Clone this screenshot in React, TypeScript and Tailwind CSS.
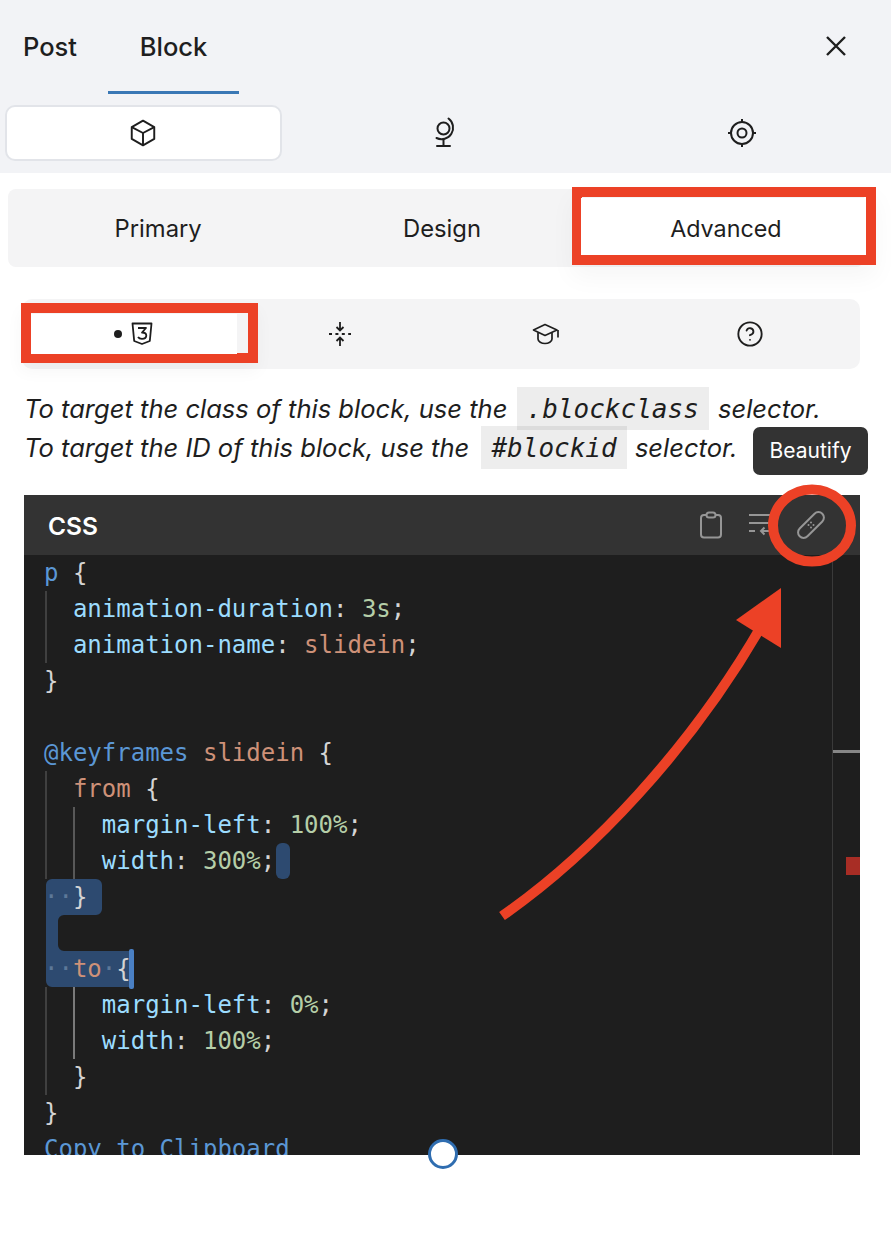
import React from "react";
import { CircleHelp } from "lucide-react";

const sans = "font-['Inter','Liberation_Sans',sans-serif]";
const mono = "font-['DejaVu_Sans_Mono','Liberation_Mono',monospace]";

const S = ({ c, children }: { c: string; children: React.ReactNode }) => <span className={c}>{children}</span>;
const sel = "text-[#5b97d5]";
const prop = "text-[#9cdcfe]";
const str = "text-[#ce9178]";
const num = "text-[#b5cea8]";
const dot = "text-[#5d7898]";

function Line({ children }: { children?: React.ReactNode }) {
  return <div className="h-[36px] leading-[36px] whitespace-pre">{children}</div>;
}

function Cube() {
  return (
    <svg width="28" height="30" viewBox="0 0 26 28" fill="none" stroke="#1e1e1e" strokeWidth="1.800" strokeLinejoin="round">
      <path d="M13 2.500 23.500 8.500V19.500L13 25.500 2.500 19.500V8.500Z" />
      <path d="M2.500 8.500 13 14 23.500 8.500M13 14V25.500" />
    </svg>
  );
}
function Globe() {
  return (
    <svg width="24" height="32" viewBox="0 0 24 32" fill="none" stroke="#1e1e1e" strokeWidth="2" strokeLinecap="round">
      <circle cx="10.500" cy="11.500" r="6" />
      <path d="M15.500 1.500a11.500 11.500 0 0 1-12 19.500" />
      <path d="M10.500 23v6M4 29h13" />
    </svg>
  );
}
function Target() {
  return (
    <svg width="30" height="30" viewBox="0 0 30 30" fill="none" stroke="#1e1e1e" strokeWidth="2">
      <circle cx="15" cy="15" r="11" />
      <circle cx="15" cy="15" r="4.500" />
      <path d="M15 1v3M15 26v3M1 15h3M26 15h3" />
    </svg>
  );
}
function Css3() {
  return (
    <svg width="22" height="24" viewBox="0 0 22 24" fill="none" stroke="#1e1e1e" strokeWidth="1.800" strokeLinejoin="round">
      <path d="M1.500 1.500h19l-1.700 17.500-7.800 3-7.800-3Z" />
      <path d="M7 6h8l-4 4.500c3 0 4.300 1.300 4.300 3 0 2-1.800 3.300-4.300 3.300-1.800 0-3.300-.7-4-1.800" />
    </svg>
  );
}
function Compress() {
  return (
    <svg width="24" height="26" viewBox="0 0 24 26" fill="none" stroke="#1e1e1e" strokeWidth="1.800">
      <path d="M12 1v8M8.500 6 12 9.500 15.500 6M12 25v-8M8.500 20 12 16.500 15.500 20" />
      <path d="M1 13h22" strokeDasharray="3 3.400" />
    </svg>
  );
}
function Grad() {
  return (
    <svg width="28" height="22" viewBox="0 0 28 22" fill="none" stroke="#1e1e1e" strokeWidth="1.700" strokeLinejoin="round">
      <path d="M13 1.500 1.500 7 13 12.500 25 7Z" />
      <path d="M6 9.500V16c0 2.500 3.500 4.500 7 4.500s7-2 7-4.500V9.500" />
      <path d="M26 7v7.500" />
    </svg>
  );
}
function Clip() {
  return (
    <svg width="24" height="28" viewBox="0 0 24 28" fill="none" stroke="#969696" strokeWidth="2">
      <rect x="2" y="4" width="20" height="22.500" rx="3" />
      <rect x="7.500" y="1.500" width="9" height="5" rx="2.500" fill="#333333" />
    </svg>
  );
}
function Wrap() {
  return (
    <svg width="26" height="24" viewBox="0 0 26 24" fill="none" stroke="#969696" strokeWidth="2">
      <path d="M1 2h24M1 10h24M1 18h6" />
      <path d="M22 10v8H13M16.500 14.500 13 18l3.500 3.500" />
    </svg>
  );
}
function Bandage() {
  return (
    <svg width="28" height="28" viewBox="0 0 28 28" fill="none" stroke="#969696" strokeWidth="2">
      <rect x="-2" y="8.500" width="32" height="11" rx="5.500" transform="rotate(-45 14 14)" />
      <g fill="#969696" stroke="none">
        <circle cx="14" cy="11.500" r="1" />
        <circle cx="11.500" cy="14" r="1" />
        <circle cx="16.500" cy="14" r="1" />
        <circle cx="14" cy="16.500" r="1" />
      </g>
    </svg>
  );
}

export default function App() {
  return (
    <div className={`relative w-[891px] h-[1245px] bg-white overflow-hidden text-[#1e1e1e] ${sans}`}>
      <div className="h-[173px] bg-[#f2f3f6]">
        <div className="h-[94px] flex items-stretch">
          <div className="w-[108px] pl-[23px] pt-[30px] text-[25.500px] leading-[34px] font-medium">Post</div>
          <div className="w-[131px] pt-[30px] text-center text-[25.500px] leading-[34px] font-medium border-b-[3px] border-[#3a78b5]">Block</div>
          <div className="ml-auto pr-[44px] pt-[35px]">
            <svg width="22" height="22" viewBox="0 0 22 22" stroke="#1e1e1e" strokeWidth="2.400" fill="none">
              <path d="M2 2l18 18M20 2 2 20" />
            </svg>
          </div>
        </div>
        <div className="flex mt-[11px] h-[56px]">
          <div className="ml-[5px] w-[277px] flex items-center justify-center bg-white rounded-[10px] border-2 border-[#e2e4e9] pr-[1px]">
            <Cube />
          </div>
          <div className="w-[326px] flex items-center justify-center"><Globe /></div>
          <div className="w-[268px] flex items-center justify-center"><Target /></div>
        </div>
      </div>

      <div className="relative mt-[16px] ml-[8px] w-[856px] h-[78px] bg-[#f4f4f5] rounded-[8px] flex items-center text-[23.800px] leading-[78px]">
        <div className="w-[300px] text-center pt-[1px] pl-[1px]">Primary</div>
        <div className="w-[268px] text-center pt-[1px] pl-[2px]">Design</div>
        <div className="ml-[6px] w-[284px] h-[57px] self-start mt-[9px] bg-white text-center leading-[61px] pl-[7px] text-[23.300px] relative z-10">Advanced</div>
      </div>

      <div className="relative mt-[32px] ml-[22px] w-[838px] h-[70px] bg-[#f4f4f5] rounded-[10px] flex items-center">
        <div className="w-[206px] h-[40px] ml-[9px] bg-white flex items-center justify-center gap-[9px] pl-[8px] relative z-10">
          <span className="w-[8px] h-[8px] rounded-full bg-[#1e1e1e] ml-[-10px]" />
          <Css3 />
        </div>
        <div className="absolute left-[306px] top-[22px]"><Compress /></div>
        <div className="absolute left-[510px] top-[24px]"><Grad /></div>
        <div className="absolute left-[714px] top-[21px]"><CircleHelp size={28} strokeWidth={1.6} color="#1e1e1e" /></div>
      </div>

      <div className="mt-[20px] ml-[24px] w-[850px] text-[25.560px] leading-[39px] italic whitespace-nowrap">
        <div className="h-[39px]">
          To target the class of this block, use the{" "}
          <span className={`${mono} relative top-[-1px] bg-black/[0.07] text-[26px] px-[10px] py-[6.500px] mx-[2px]`}>.blockclass</span>{" "}
          selector.
        </div>
        <div className="h-[39px]">
          To target the ID of this block, use the{" "}
          <span className={`${mono} relative top-[-1px] bg-black/[0.07] text-[26px] px-[10px] py-[6.500px] ml-[5px] mr-[1px]`}>#blockid</span>{" "}
          selector.
        </div>
      </div>

      <div className="absolute left-[24px] top-[495px] w-[836px] h-[660px] flex flex-col">
        <div className="h-[60px] shrink-0 bg-[#333333] flex items-center pl-[24px] text-white text-[24.500px] font-semibold">
          <span className="pt-[2px]">CSS</span>
          <div className="ml-auto flex items-center">
            <div className="mr-[25px] flex"><Clip /></div>
            <div className="mr-[23px] flex"><Wrap /></div>
            <div className="mr-[35px] flex"><Bandage /></div>
          </div>
        </div>
        <div className={`relative flex-1 bg-[#1e1e1e] overflow-hidden text-[24px] text-[#d4d4d4] pl-[20px] ${mono}`}>
          <svg className="absolute left-0 top-0" width="300" height="440" fill="#2d4a70">
            <path d="M252 294a6 6 0 0 1 6-6h2a6 6 0 0 1 6 6v24a6 6 0 0 1-6 6h-2a6 6 0 0 1-6-6Z" />
            <path d="M28 324h44a6 6 0 0 1 6 6v24a6 6 0 0 1-6 6H40a6 6 0 0 0-6 6v24a6 6 0 0 0 6 6h66v36H28a6 6 0 0 1-6-6V330a6 6 0 0 1 6-6Z" />
          </svg>
          <div className="absolute left-[105px] top-[394px] w-[5px] h-[40px] bg-[#4a80c4] rounded-[2px]" />
          <div className="absolute left-[21px] top-[36px] w-[2px] h-[72px] bg-[#404040]" />
          <div className="absolute left-[21px] top-[216px] w-[2px] h-[108px] bg-[#404040]" />
          <div className="absolute left-[21px] top-[432px] w-[2px] h-[108px] bg-[#404040]" />
          <div className="absolute left-[49px] top-[252px] w-[2px] h-[72px] bg-[#585858]" />
          <div className="absolute left-[49px] top-[432px] w-[2px] h-[72px] bg-[#7a7a7a]" />
          <div className="absolute left-[808px] top-0 w-px h-full bg-[#3a3a3a]" />
          <div className="absolute left-[809px] top-[195px] w-[27px] h-[3px] bg-[#868686]" />
          <div className="absolute left-[822px] top-[302px] w-[14px] h-[18px] bg-[#a82d25]" />
          <div className="relative">
            <Line><S c={sel}>p</S> {"{"}</Line>
            <Line>  <S c={prop}>animation-duration</S>: <S c={num}>3s</S>;</Line>
            <Line>  <S c={prop}>animation-name</S>: <S c={str}>slidein</S>;</Line>
            <Line>{"}"}</Line>
            <Line />
            <Line><S c={sel}>@keyframes</S> <S c={str}>slidein</S> {"{"}</Line>
            <Line>  <S c={str}>from</S> {"{"}</Line>
            <Line>    <S c={prop}>margin-left</S>: <S c={num}>100%</S>;</Line>
            <Line>    <S c={prop}>width</S>: <S c={num}>300%</S>;</Line>
            <Line><S c={dot}>··</S>{"}"}</Line>
            <Line />
            <Line><S c={dot}>··</S><S c={str}>to</S><S c={dot}>·</S>{"{"}</Line>
            <Line>    <S c={prop}>margin-left</S>: <S c={num}>0%</S>;</Line>
            <Line>    <S c={prop}>width</S>: <S c={num}>100%</S>;</Line>
            <Line>  {"}"}</Line>
            <Line>{"}"}</Line>
            <Line><S c={sel}>Copy to Clipboard</S></Line>
          </div>
        </div>
      </div>

      <div className="absolute left-[572px] top-[187px] w-[304px] h-[78px] border-[10px] border-[#ec4126] shadow-[0_12px_24px_rgba(0,0,0,0.04)]" />
      <div className="absolute left-[21px] top-[303px] w-[237px] h-[60px] border-[10px] border-[#ec4126] shadow-[0_8px_16px_rgba(0,0,0,0.04)]" />

      <div className="absolute left-[753px] top-[427px] w-[115px] h-[48px] bg-[#333333] rounded-[7px] flex items-center justify-center text-white text-[21px]">
        Beautify
      </div>

      <svg className="absolute left-0 top-0 pointer-events-none" width="891" height="1245" fill="none">
        <ellipse cx="812" cy="525.500" rx="39" ry="36" stroke="#ec4126" strokeWidth="10" />
        <path d="M502 916C590 855 690 750 762 625" stroke="#ec4126" strokeWidth="10" />
        <path d="M781 588 736 620 781 648Z" fill="#ec4126" />
      </svg>

      <div className="absolute left-[428px] top-[1139px] w-[30px] h-[30px] rounded-full bg-white border-[3px] border-[#2f6db0]" />
    </div>
  );
}
